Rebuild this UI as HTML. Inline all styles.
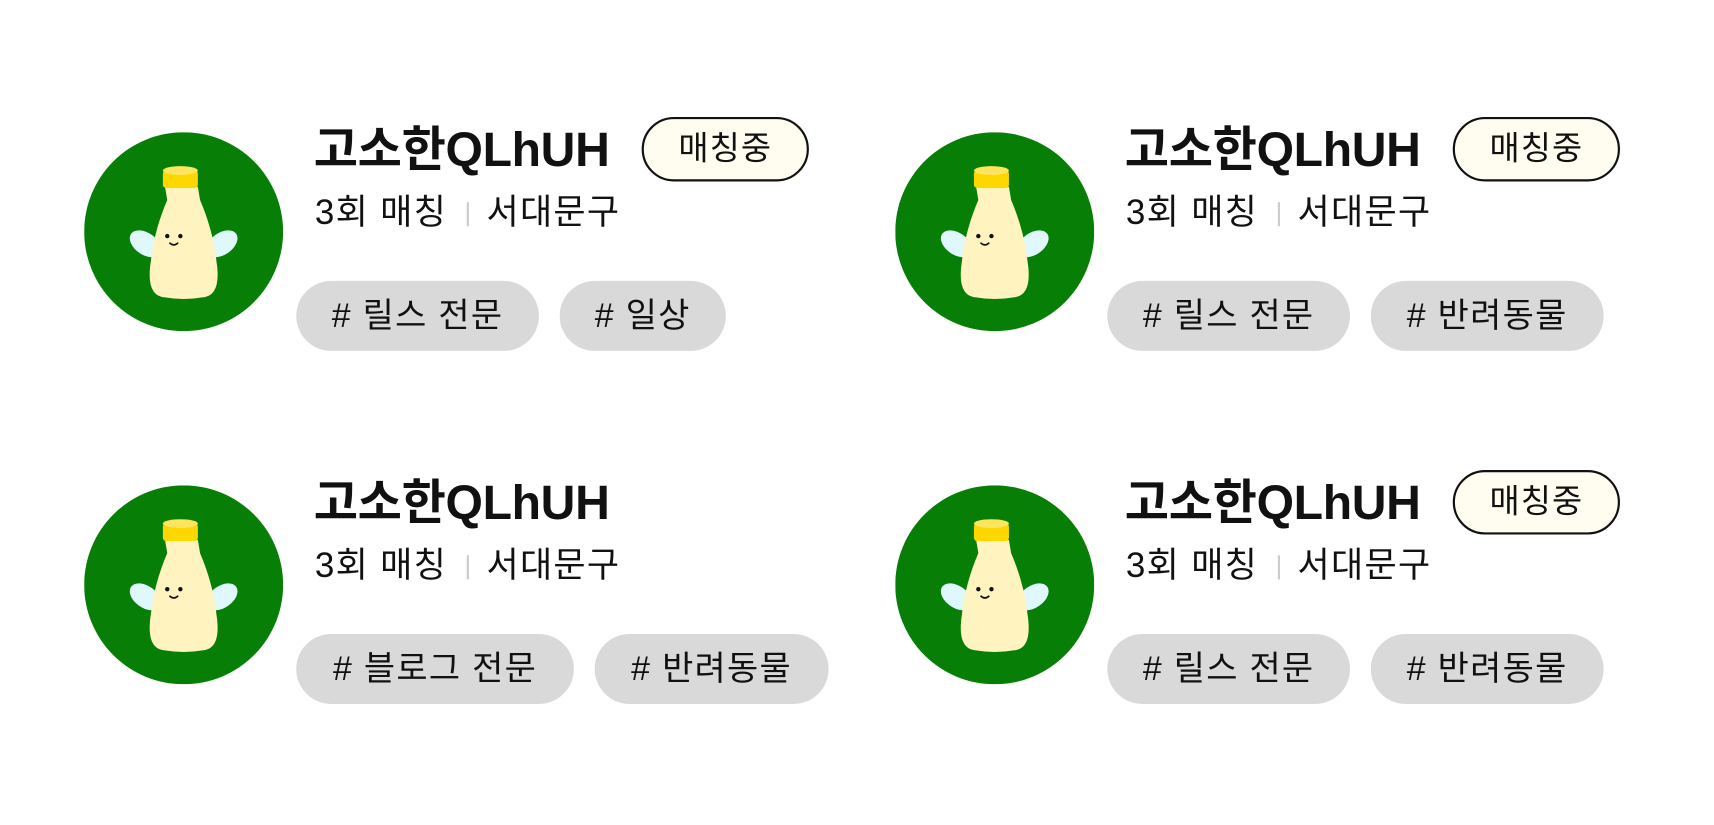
<!DOCTYPE html>
<html><head><meta charset="utf-8"><style>
html,body{margin:0;padding:0;background:#fff;width:1714px;height:825px;overflow:hidden}
#w{position:absolute;left:0;top:0;width:1568px;height:755px;transform:scale(1.09311);transform-origin:0 0;font-family:"Liberation Sans","Noto Sans CJK KR",sans-serif;color:#111}
.card{position:absolute;width:740px;height:260px}
.av{position:absolute;left:77px;top:121px;width:182px;height:182px}
.name{position:absolute;left:287px;top:113px;font-size:44px;font-weight:700;letter-spacing:-0.3px;line-height:50px;white-space:nowrap}
.badge{position:absolute;left:587px;top:107px;width:149px;height:55px;border:2px solid #111;border-radius:30px;background:#fffdf0;font-size:30px;line-height:55px;text-align:center;letter-spacing:1px}
.meta{position:absolute;left:288px;top:174px;font-size:32px;line-height:40px;white-space:nowrap;letter-spacing:1.2px}
.meta i{display:inline-block;width:2px;height:22px;background:#ccc;margin:0 16px 0 18px;vertical-align:-2px}
.tag{position:absolute;top:257px;height:64px;border-radius:32px;background:#d9d9d9;font-size:31px;line-height:64px;text-align:center;white-space:nowrap;letter-spacing:1.2px}
</style></head><body><div id="w">
<svg width="0" height="0" style="position:absolute"><defs><g id="bot">
<circle cx="91" cy="91" r="91" fill="#077f07"/>
<ellipse cx="56" cy="102" rx="16" ry="10" transform="rotate(35 56 102)" fill="#dff8fd"/>
<ellipse cx="126" cy="102" rx="16" ry="10" transform="rotate(-35 126 102)" fill="#dff8fd"/>
<path d="M74 50 L104 50 L106 62 Q118 90 121 118 Q126 150 108 151 Q91 154 74 151 Q56 150 61 118 Q64 90 76 62 Z" fill="#fff3bf"/>
<rect x="72" y="35" width="32" height="16" rx="3" fill="#ffd700"/>
<ellipse cx="88" cy="35" rx="16" ry="4" fill="#ffe45e"/>
<circle cx="76" cy="95" r="2" fill="#111"/><circle cx="88" cy="95" r="2" fill="#111"/>
<path d="M78 101 Q82 105 86 101" stroke="#111" stroke-width="1.5" fill="none"/>
</g></defs></svg>

<div class="card" style="left:0;top:0">
<svg class="av" viewBox="0 0 182 182"><use href="#bot"/></svg>
<div class="name">고소한QLhUH</div><div class="badge">매칭중</div>
<div class="meta">3회 매칭<i></i>서대문구</div>
<div class="tag" style="left:271px;width:222px"># 릴스 전문</div>
<div class="tag" style="left:512px;width:152px"># 일상</div>
</div>

<div class="card" style="left:742px;top:0">
<svg class="av" viewBox="0 0 182 182"><use href="#bot"/></svg>
<div class="name">고소한QLhUH</div><div class="badge">매칭중</div>
<div class="meta">3회 매칭<i></i>서대문구</div>
<div class="tag" style="left:271px;width:222px"># 릴스 전문</div>
<div class="tag" style="left:512px;width:213px"># 반려동물</div>
</div>

<div class="card" style="left:0;top:323px">
<svg class="av" viewBox="0 0 182 182"><use href="#bot"/></svg>
<div class="name">고소한QLhUH</div>
<div class="meta">3회 매칭<i></i>서대문구</div>
<div class="tag" style="left:271px;width:254px"># 블로그 전문</div>
<div class="tag" style="left:544px;width:214px"># 반려동물</div>
</div>

<div class="card" style="left:742px;top:323px">
<svg class="av" viewBox="0 0 182 182"><use href="#bot"/></svg>
<div class="name">고소한QLhUH</div><div class="badge">매칭중</div>
<div class="meta">3회 매칭<i></i>서대문구</div>
<div class="tag" style="left:271px;width:222px"># 릴스 전문</div>
<div class="tag" style="left:512px;width:213px"># 반려동물</div>
</div>
</div></body></html>
